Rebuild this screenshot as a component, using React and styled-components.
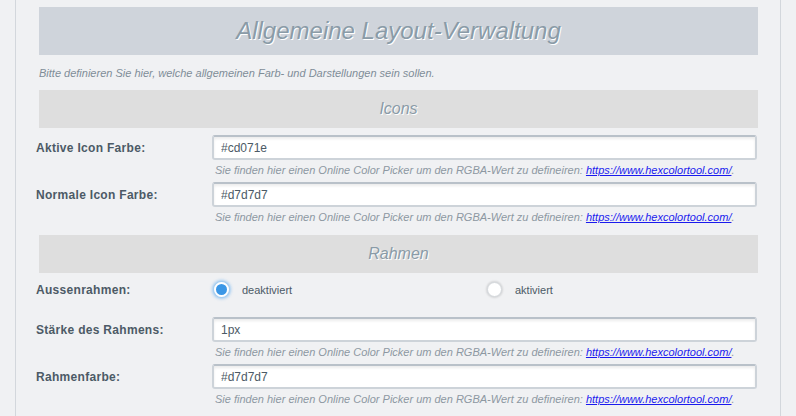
import React from 'react';
import styled, { createGlobalStyle } from 'styled-components';

const GlobalStyle = createGlobalStyle`
	html, body {
		margin: 0;
		padding: 0;
		background: #f0f1f3;
		font-family: "Liberation Sans", Arial, Helvetica, sans-serif;
	}
`

const Page = styled.div`
	width: 796px;
	height: 416px;
	overflow: hidden;
	padding-left: 15px;
	box-sizing: border-box;
`

const Panel = styled.div`
	width: 766px;
	height: 416px;
	box-sizing: border-box;
	border-left: 1px solid #d3d7dc;
	border-right: 1px solid #d3d7dc;
	padding: 7px 22px 0 20px;
	background: #f0f1f3;
`

const TitleBand = styled.div`
	margin-left: 3px;
	height: 48px;
	background: #cfd4db;
	display: flex;
	align-items: center;
	justify-content: center;
	font-style: italic;
	font-size: 24px;
	color: #8a9ba7;
	text-shadow: 1px 1px 0 #ffffff;
`

const Intro = styled.div`
	margin: 12px 0 11px 3px;
	font-size: 11px;
	line-height: 12px;
	font-style: italic;
	color: #7f8d98;
`

const SectionBand = styled.div`
	margin-left: 3px;
	height: 38px;
	background: #dedede;
	display: flex;
	align-items: center;
	justify-content: center;
	font-style: italic;
	font-size: 16px;
	color: #8a9ba7;
	text-shadow: 1px 1px 0 #ffffff;
	margin-top: ${props => props.$top || 0}px;
`

const Row = styled.div`
	display: grid;
	grid-template-columns: 176px 1fr;
	margin-top: ${props => props.$top}px;
`

const Label = styled.div`
	font-size: 12px;
	font-weight: bold;
	letter-spacing: 0.3px;
	color: #4c5a66;
	height: 25px;
	display: flex;
	align-items: center;
`

const Field = styled.div`
	display: flex;
	flex-direction: column;
	padding-right: 1px;
`

const Input = styled.input`
	height: 25px;
	box-sizing: border-box;
	border: 2px solid #cdd3d9;
	border-top-color: #b9c1c9;
	border-radius: 3px;
	box-shadow: inset 0 2px 3px rgba(0, 0, 0, 0.08);
	background: #ffffff;
	padding: 0 7px;
	font-family: "Liberation Sans", Arial, sans-serif;
	font-size: 12px;
	color: #4c5a66;
	outline: none;
`

const Hint = styled.div`
	margin-top: 4px;
	padding-left: 3px;
	font-size: 11px;
	line-height: 12px;
	font-style: italic;
	color: #8d98a2;

	a {
		color: #1a1aee;
		text-decoration: underline;
	}
`

const RadioGroup = styled.div`
	display: grid;
	grid-template-columns: 273px 1fr;
	height: 25px;
	align-items: center;
`

const RadioOption = styled.label`
	display: flex;
	align-items: center;
	gap: 13px;
	font-size: 11px;
	color: #4c5a66;
	padding-left: 2px;
`

const RadioDot = styled.span`
	width: 15px;
	height: 15px;
	border-radius: 50%;
	box-sizing: border-box;
	background: ${props => props.$checked ? '#3b97e6' : '#ffffff'};
	border: ${props => props.$checked ? '2px solid #ffffff' : '1px solid #d4d8dc'};
	box-shadow: ${props => props.$checked
		? '0 0 0 1px #a9cff0, 0 0 3px 2px rgba(90, 170, 240, 0.55)'
		: '0 0 2px 1px rgba(0, 0, 0, 0.12)'};
`

const LINK = 'https://www.hexcolortool.com/';

const ColorHint = () => (
	<Hint>
		Sie finden hier einen Online Color Picker um den RGBA-Wert zu defineiren: <a href={LINK}>{LINK}</a>.
	</Hint>
)

const InputRow = ({ label, value, top }) => (
	<Row $top={top}>
		<Label>{label}</Label>
		<Field>
			<Input type='text' defaultValue={value} />
			<ColorHint />
		</Field>
	</Row>
)

const App = () => {
	return (
		<Page>
			<GlobalStyle />
			<Panel>
				<TitleBand>Allgemeine Layout-Verwaltung</TitleBand>
				<Intro>Bitte definieren Sie hier, welche allgemeinen Farb- und Darstellungen sein sollen.</Intro>
				<SectionBand>Icons</SectionBand>
				<InputRow label='Aktive Icon Farbe:' value='#cd071e' top={7} />
				<InputRow label='Normale Icon Farbe:' value='#d7d7d7' top={6} />
				<SectionBand $top={12}>Rahmen</SectionBand>
				<Row $top={4}>
					<Label>Aussenrahmen:</Label>
					<RadioGroup>
						<RadioOption><RadioDot $checked />deaktiviert</RadioOption>
						<RadioOption><RadioDot />aktiviert</RadioOption>
					</RadioGroup>
				</Row>
				<InputRow label='Stärke des Rahmens:' value='1px' top={15} />
				<InputRow label='Rahmenfarbe:' value='#d7d7d7' top={6} />
			</Panel>
		</Page>
	);
}

export default App;
